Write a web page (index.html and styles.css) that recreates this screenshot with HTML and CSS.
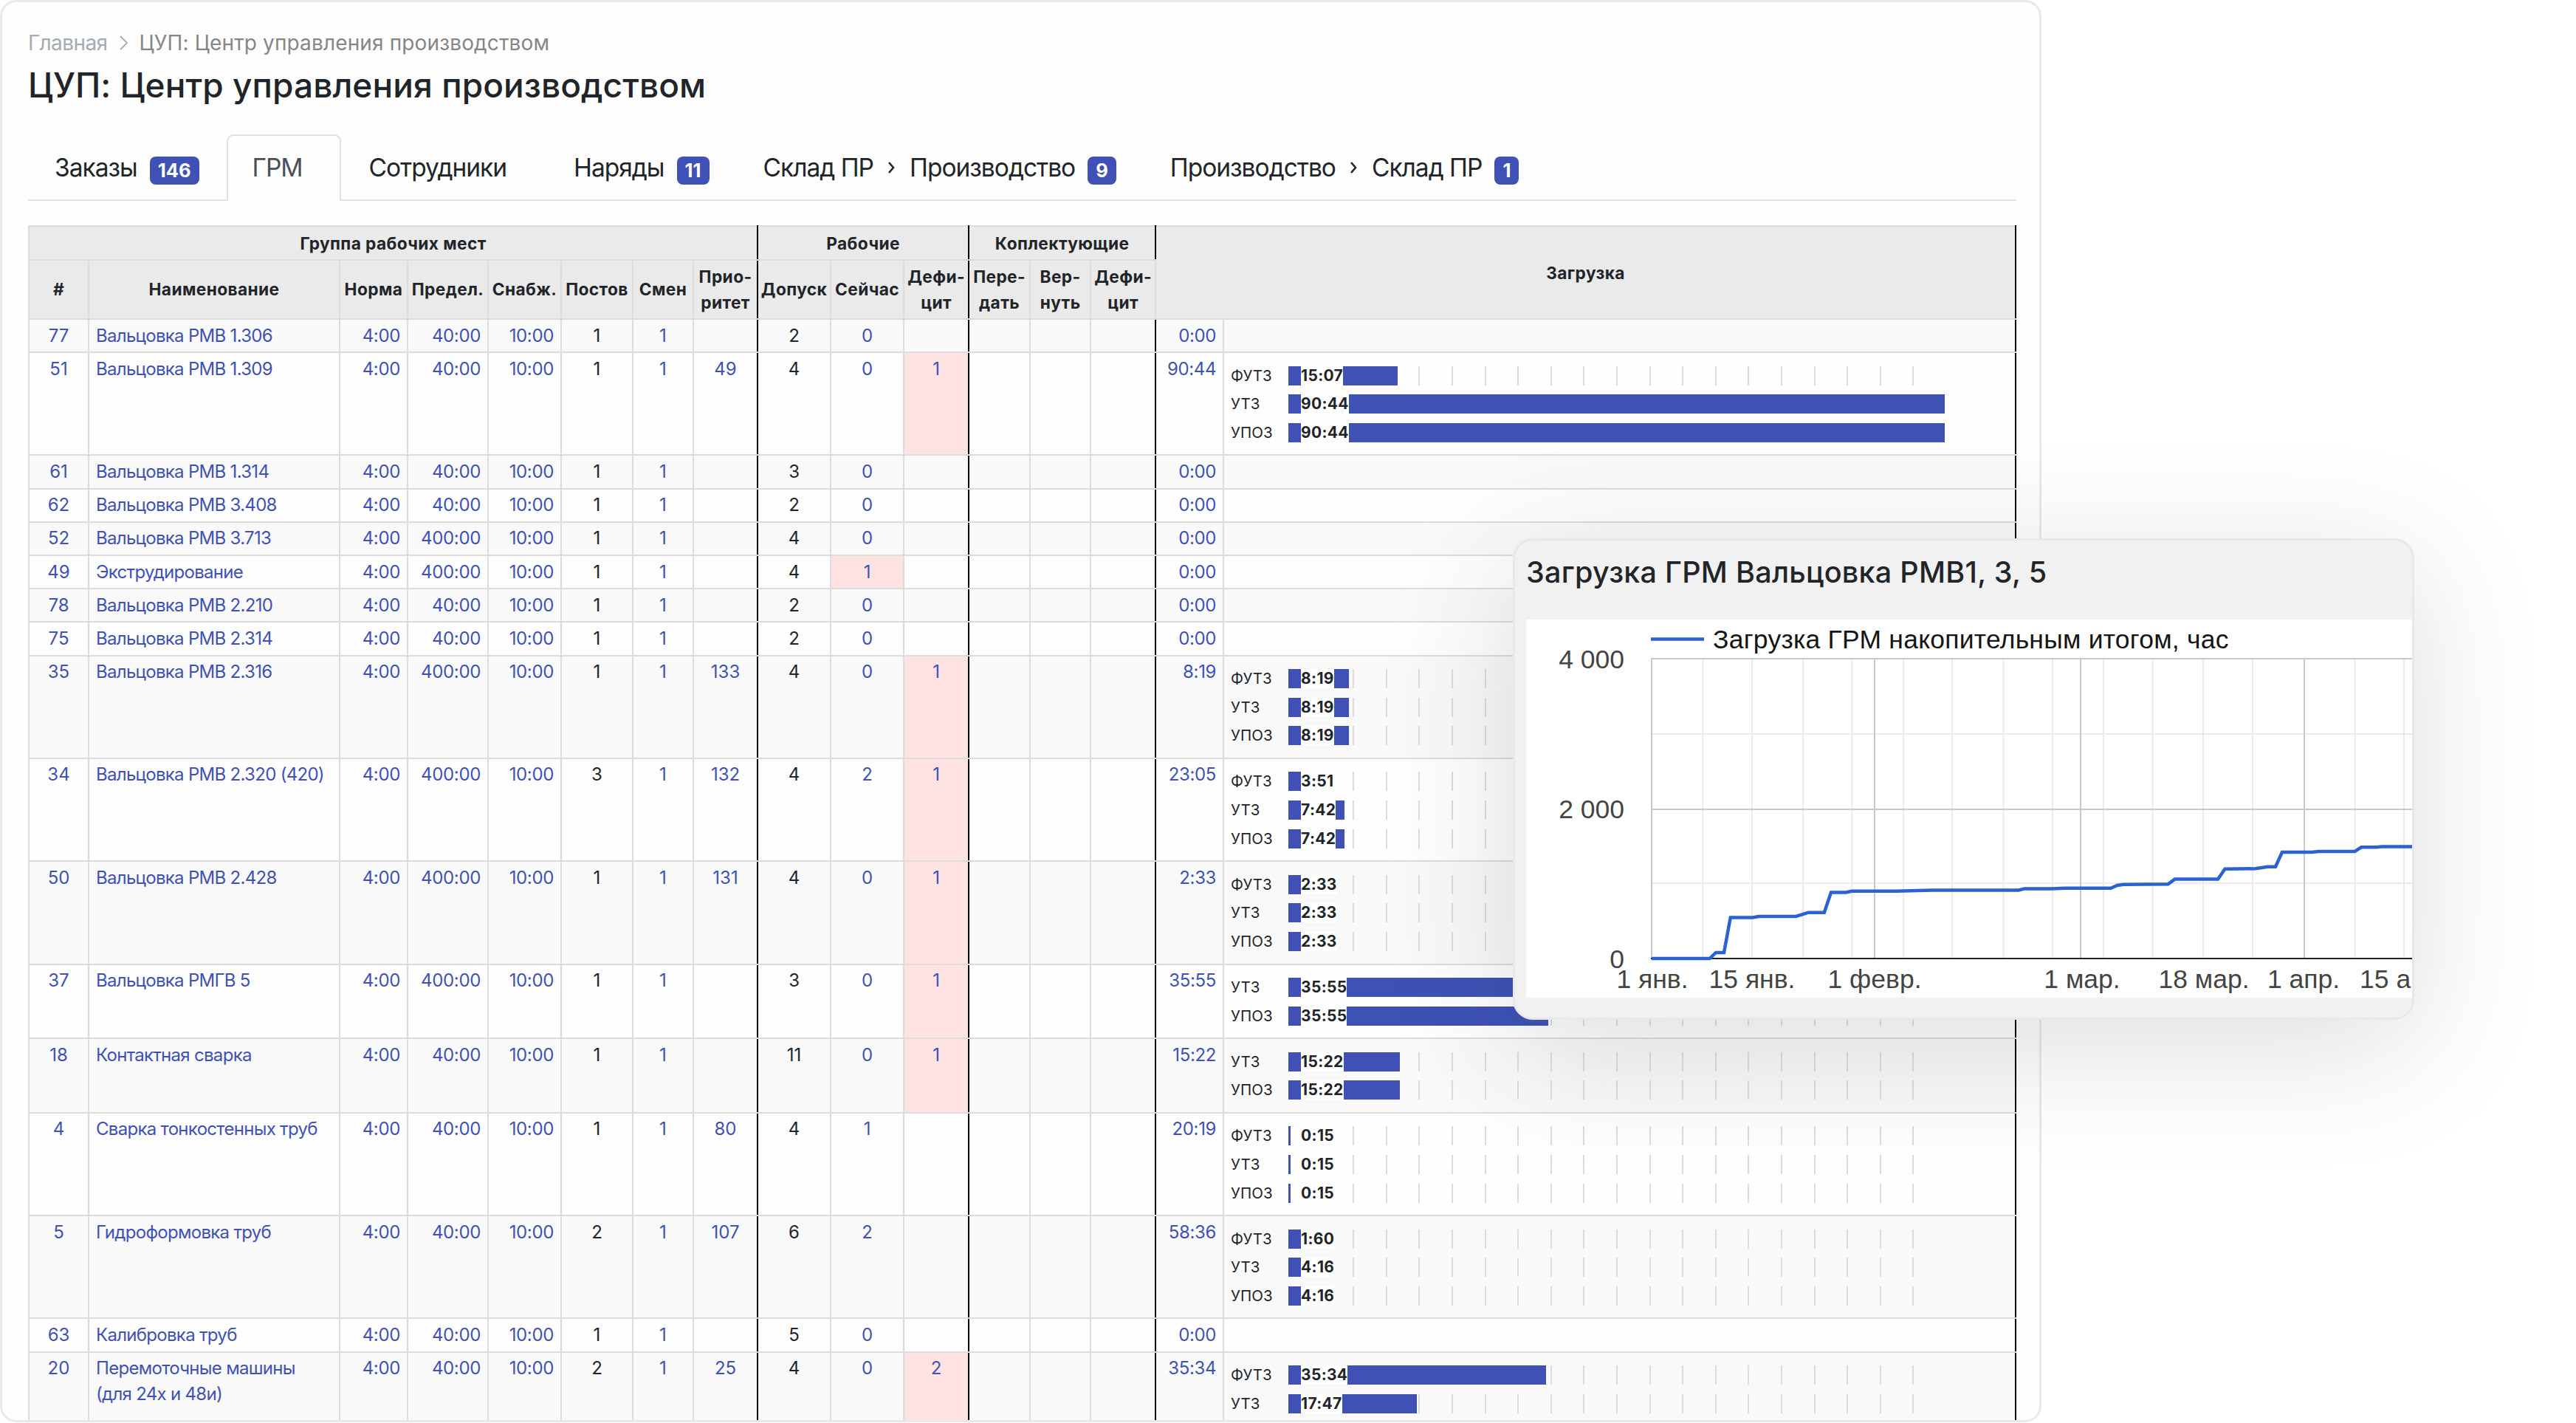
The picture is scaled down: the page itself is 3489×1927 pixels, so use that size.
FILE: index.html
```html
<!DOCTYPE html>
<html lang="ru">

<head>
    <meta charset="UTF-8" />
    <meta name="viewport" content="width=device-width, initial-scale=1.0" />
    <title>ЦУП: Центр управления производством</title>
    <link rel="stylesheet" href="styles.css">
</head>

<body>
    <main class="panel">
        <nav class="breadcrumb">
            <a href="#">Главная</a>
            <svg class="breadcrumb-arrow" viewBox="0 0 11 20"><path d="M1 1l9 9-9 9" /></svg>
            <span>ЦУП: Центр управления производством</span>
        </nav>
        <h1>ЦУП: Центр управления производством</h1>

        <ul class="tabs">
            <li class="tab">Заказы <span class="badge">146</span></li>
            <li class="tab active">ГРМ</li>
            <li class="tab tab-staff">Сотрудники</li>
            <li class="tab">Наряды <span class="badge">11</span></li>
            <li class="tab">Склад ПР
                <svg class="tab-arrow" viewBox="0 0 10 18"><path d="M2 2l6 7-6 7" /></svg>
                Производство <span class="badge">9</span>
            </li>
            <li class="tab">Производство
                <svg class="tab-arrow" viewBox="0 0 10 18"><path d="M2 2l6 7-6 7" /></svg>
                Склад ПР <span class="badge">1</span>
            </li>
        </ul>

        <table class="load-table">
            <colgroup>
                <col class="c-id"><col class="c-name"><col class="c-norm"><col class="c-limit"><col class="c-supply">
                <col class="c-posts"><col class="c-shifts"><col class="c-prio">
                <col class="c-allowed"><col class="c-now"><col class="c-deficit">
                <col class="c-give"><col class="c-return"><col class="c-deficit">
                <col class="c-total"><col class="c-load">
            </colgroup>
            <thead>
                <tr class="head-groups">
                    <th colspan="8" class="sep">Группа рабочих мест</th>
                    <th colspan="3" class="sep">Рабочие</th>
                    <th colspan="3" class="sep">Коплектующие</th>
                    <th colspan="2" rowspan="2" class="sep">Загрузка</th>
                </tr>
                <tr class="head-cols">
                    <th>#</th>
                    <th>Наименование</th>
                    <th>Норма</th>
                    <th>Предел.</th>
                    <th>Снабж.</th>
                    <th>Постов</th>
                    <th>Смен</th>
                    <th class="sep">Прио-<br>ритет</th>
                    <th>Допуск</th>
                    <th>Сейчас</th>
                    <th class="sep">Дефи-<br>цит</th>
                    <th>Пере-<br>дать</th>
                    <th>Вер-<br>нуть</th>
                    <th class="sep">Дефи-<br>цит</th>
                </tr>
            </thead>
            <tbody id="loadBody"></tbody>
        </table>
    </main>

    <section class="popup">
        <h2>Загрузка ГРМ Вальцовка РМВ1, 3, 5</h2>
        <svg class="chart" width="1200" height="512" viewBox="0 0 1200 512">
            <!-- minor grid -->
            <path class="grid-minor" d="M239.5 53V459M306 53V459M375 53V459M441.5 53V459M511 53V459M577 53V459M646.5 53V459M713 53V459M782 53V459M848.5 53V459M917 53V459M984 53V459M1122.5 53V459M1189 53V459M169 155H1200M169 357H1200" />
            <!-- major grid -->
            <path class="grid-major" d="M170 53V459M472 53V459M751 53V459M1054 53V459M169 53H1200M169 257H1200" />
            <path class="axis" d="M169 459H1200" />
            <path class="series" d="M170 459H248.700L257 451H268L276.800 403.400H307L315 402H365.600L382.400 396.700H403.800L413 369.500H433.400L441 367.700H501.300L549.700 366.400H667L674.700 364.600H713L731 363.700H792L800.600 360L809 358.800L869.500 358.300L878.600 351.600H937L946.500 337.800L987.800 337.300L1004.400 334.700H1015L1024 315H1064.300L1073.400 314.100H1122.200L1131.200 308.300H1151.400L1159 307.400H1200" />
            <path class="series" d="M169 26.500H241" />
            <text class="legend" x="253" y="38.500">Загрузка ГРМ накопительным итогом, час</text>
            <g class="label-y">
                <text x="133" y="65.500">4 000</text>
                <text x="133" y="268.500">2 000</text>
                <text x="133" y="471.500">0</text>
            </g>
            <g class="label-x">
                <text x="171" y="499">1 янв.</text>
                <text x="306" y="499">15 янв.</text>
                <text x="472" y="499">1 февр.</text>
                <text x="753" y="499">1 мар.</text>
                <text x="918" y="499">18 мар.</text>
                <text x="1053" y="499">1 апр.</text>
                <text x="1188" y="499">15 апр.</text>
            </g>
        </svg>
    </section>

    <script>
        const PX_PER_HOUR = 9.8;

        // id, name, limit, posts, priority, allowed, now, deficit, total, bars
        const groups = [
            [77, "Вальцовка РМВ 1.306", "40:00", 1, "", 2, 0, "", "0:00", []],
            [51, "Вальцовка РМВ 1.309", "40:00", 1, 49, 4, 0, 1, "90:44", [["ФУТЗ", "15:07"], ["УТЗ", "90:44"], ["УПОЗ", "90:44"]]],
            [61, "Вальцовка РМВ 1.314", "40:00", 1, "", 3, 0, "", "0:00", []],
            [62, "Вальцовка РМВ 3.408", "40:00", 1, "", 2, 0, "", "0:00", []],
            [52, "Вальцовка РМВ 3.713", "400:00", 1, "", 4, 0, "", "0:00", []],
            [49, "Экструдирование", "400:00", 1, "", 4, 1, "", "0:00", []],
            [78, "Вальцовка РМВ 2.210", "40:00", 1, "", 2, 0, "", "0:00", []],
            [75, "Вальцовка РМВ 2.314", "40:00", 1, "", 2, 0, "", "0:00", []],
            [35, "Вальцовка РМВ 2.316", "400:00", 1, 133, 4, 0, 1, "8:19", [["ФУТЗ", "8:19"], ["УТЗ", "8:19"], ["УПОЗ", "8:19"]]],
            [34, "Вальцовка РМВ 2.320 (420)", "400:00", 3, 132, 4, 2, 1, "23:05", [["ФУТЗ", "3:51"], ["УТЗ", "7:42"], ["УПОЗ", "7:42"]]],
            [50, "Вальцовка РМВ 2.428", "400:00", 1, 131, 4, 0, 1, "2:33", [["ФУТЗ", "2:33"], ["УТЗ", "2:33"], ["УПОЗ", "2:33"]]],
            [37, "Вальцовка РМГВ 5", "400:00", 1, "", 3, 0, 1, "35:55", [["УТЗ", "35:55"], ["УПОЗ", "35:55"]]],
            [18, "Контактная сварка", "40:00", 1, "", 11, 0, 1, "15:22", [["УТЗ", "15:22"], ["УПОЗ", "15:22"]]],
            [4, "Сварка тонкостенных труб", "40:00", 1, 80, 4, 1, "", "20:19", [["ФУТЗ", "0:15"], ["УТЗ", "0:15"], ["УПОЗ", "0:15"]]],
            [5, "Гидроформовка труб", "40:00", 2, 107, 6, 2, "", "58:36", [["ФУТЗ", "1:60"], ["УТЗ", "4:16"], ["УПОЗ", "4:16"]]],
            [63, "Калибровка труб", "40:00", 1, "", 5, 0, "", "0:00", []],
            [20, "Перемоточные машины<br>(для 24х и 48и)", "40:00", 2, 25, 4, 0, 2, "35:34", [["ФУТЗ", "35:34"], ["УТЗ", "17:47"]]],
        ];

        function hours(time) {
            const [h, m] = time.split(":").map(Number);
            return h + m / 60;
        }

        function renderBar([label, time]) {
            const width = (hours(time) * PX_PER_HOUR).toFixed(1);
            return `<div class="bar-row">
                <span class="bar-label">${label}</span>
                <div class="track">
                    <div class="bar" style="width: ${width}px"></div>
                    <b class="bar-value">${time}</b>
                </div>
            </div>`;
        }

        function renderRow([id, name, limit, posts, prio, allowed, now, deficit, total, bars]) {
            const nowClass = id === 49 ? "link alert" : "link";
            return `<tr class="bars-${bars.length}">
                <td class="link">${id}</td>
                <td class="link name">${name}</td>
                <td class="link num">4:00</td>
                <td class="link num">${limit}</td>
                <td class="link num">10:00</td>
                <td>${posts}</td>
                <td class="link">1</td>
                <td class="link sep">${prio}</td>
                <td>${allowed}</td>
                <td class="${nowClass}">${now}</td>
                <td class="link sep ${deficit ? "alert" : ""}">${deficit}</td>
                <td></td>
                <td></td>
                <td class="sep"></td>
                <td class="link num">${total}</td>
                <td class="load sep">${bars.map(renderBar).join("")}</td>
            </tr>`;
        }

        document.getElementById("loadBody").innerHTML = groups.map(renderRow).join("");
    </script>
</body>

</html>
```
FILE: styles.css
```css
* {
    box-sizing: border-box;
}

body {
    margin: 0;
    height: 1927px;
    overflow: hidden;
    position: relative;
    background: #fff;
    color: #212529;
    font-family: Inter, "Liberation Sans", sans-serif;
}

.panel {
    width: 2765px;
    height: 1926px;
    padding: 38px 31px 0 35px;
    border: 3px solid #e9e9e9;
    border-radius: 22px;
    overflow: hidden;
    background: #fefefe;
}

/* Breadcrumb and title */
.breadcrumb {
    display: flex;
    align-items: center;
    height: 34px;
    font-size: 28px;
    letter-spacing: 0.14px;
    color: #868686;
}

.breadcrumb a {
    color: #a3abb3;
    letter-spacing: -0.6px;
    text-decoration: none;
}

.breadcrumb-arrow {
    width: 11px;
    height: 20px;
    margin: 0 15px 0 17px;
    fill: none;
    stroke: #a9b0b7;
    stroke-width: 2;
}

h1 {
    margin: 12px 0 39px;
    font-size: 46px;
    font-weight: 500;
    line-height: 56px;
    letter-spacing: 0.07px;
}

/* Tabs */
.tabs {
    display: flex;
    height: 90px;
    margin: 0 0 33px;
    padding: 0;
    list-style: none;
    border-bottom: 2px solid #dee2e6;
    font-size: 33.5px;
    letter-spacing: -1px;
}

.tab {
    display: flex;
    align-items: center;
    height: 90px;
    padding: 0 35px 2px 34px;
    border: 2px solid transparent;
    border-bottom: 0;
    white-space: nowrap;
}

.tab.active {
    padding: 0 50px 2px 33px;
    color: #495057;
    background: #fefefe;
    border-color: #dee2e6;
    border-radius: 9px 9px 0 0;
}

.tab-staff {
    padding-left: 36px;
    padding-right: 53px;
}

.tab-arrow {
    width: 10px;
    height: 18px;
    margin: 0 20px 0 19px;
    fill: none;
    stroke: #212529;
    stroke-width: 2.6;
}

.badge {
    margin: 8px 0 0 17px;
    padding: 0 11px;
    border-radius: 8px;
    background: #3f51b5;
    color: #fff;
    font-size: 25.5px;
    font-weight: 700;
    line-height: 38px;
    letter-spacing: 0;
}

/* Table */
.load-table {
    width: 2693px;
    table-layout: fixed;
    border-collapse: collapse;
    font-size: 24px;
    line-height: 34.5px;
}

.c-id { width: 81px; }
.c-name { width: 340px; }
.c-norm { width: 92px; }
.c-limit { width: 109px; }
.c-supply { width: 99px; }
.c-posts { width: 97px; }
.c-shifts { width: 82px; }
.c-prio { width: 87px; }
.c-allowed { width: 99px; }
.c-now { width: 99px; }
.c-deficit { width: 88px; }
.c-give { width: 83px; }
.c-return { width: 82px; }
.c-total { width: 92px; }

.load-table th,
.load-table td {
    border: 2px solid #dcdcdc;
    text-align: center;
}

.load-table th {
    padding: 1px 0 0;
    background: #eaeaea;
    font-size: 22.7px;
    font-weight: 700;
    letter-spacing: 0.4px;
    white-space: nowrap;
}

.load-table .head-groups th {
    padding-top: 2px;
}

.load-table td {
    height: 45.2px;
    padding: 4.5px 9px 0;
    vertical-align: top;
    white-space: nowrap;
}

.load-table .sep {
    border-right-color: #000;
}

.load-table .name {
    text-align: left;
    letter-spacing: -0.7px;
}

.load-table .num {
    text-align: right;
    letter-spacing: -0.35px;
}

.load-table .link {
    color: #3f51b5;
}

.load-table .alert {
    background: #ffe3e3;
}

.head-groups {
    height: 46px;
}

.head-cols {
    height: 80px;
}

tbody tr {
    height: 45.2px;
}

tbody tr:nth-child(odd) {
    background: #f9f9f9;
}

tbody .bars-3,
tbody .bars-2:last-child {
    height: 139.3px;
}

tbody .bars-2 {
    height: 100.7px;
}

/* Load bars */
.load-table .load {
    padding: 17.5px 0 0 9px;
    text-align: left;
}

.bar-row {
    display: flex;
    align-items: center;
    height: 26px;
    margin-bottom: 12.6px;
    font-size: 20.5px;
    line-height: 26px;
}

.bar-row:last-child {
    margin-bottom: 0;
}

.bar-label {
    width: 78px;
}

.track {
    position: relative;
    width: 848px;
    height: 26px;
    background: repeating-linear-gradient(to right, transparent 0 42.6px, #dcdcdc 42.6px 44.6px);
}

.bar {
    height: 26px;
    background: #3f51b5;
}

.bar-value {
    position: absolute;
    top: 0;
    left: 17px;
    background: #fff;
    font-size: 21px;
    letter-spacing: 0.3px;
}

/* Chart popup */
.popup {
    position: absolute;
    left: 2049px;
    top: 729px;
    width: 1221px;
    height: 652px;
    padding: 19px 0 0 15px;
    border: 3px solid #e8e8e8;
    border-radius: 27px;
    overflow: hidden;
    background: #f1f1f1;
    box-shadow: 0 36px 175px rgba(30, 50, 60, 0.16);
}

.popup h2 {
    margin: 0 0 40px;
    font-size: 39.5px;
    font-weight: 500;
    line-height: 48px;
    letter-spacing: 0.28px;
}

.chart {
    display: block;
    background: #fff;
    font-family: "Liberation Sans", Arial, sans-serif;
    font-size: 35.5px;
}

.grid-minor {
    stroke: #ebebeb;
    stroke-width: 2;
}

.grid-major {
    stroke: #c8c8c8;
    stroke-width: 2;
}

.axis {
    stroke: #222;
    stroke-width: 2;
}

.series {
    fill: none;
    stroke: #2a62d2;
    stroke-width: 4.5;
}

.legend {
    fill: #151515;
    letter-spacing: 0.23px;
}

.label-y {
    fill: #444;
    text-anchor: end;
}

.label-x {
    fill: #444;
    text-anchor: middle;
}
```
